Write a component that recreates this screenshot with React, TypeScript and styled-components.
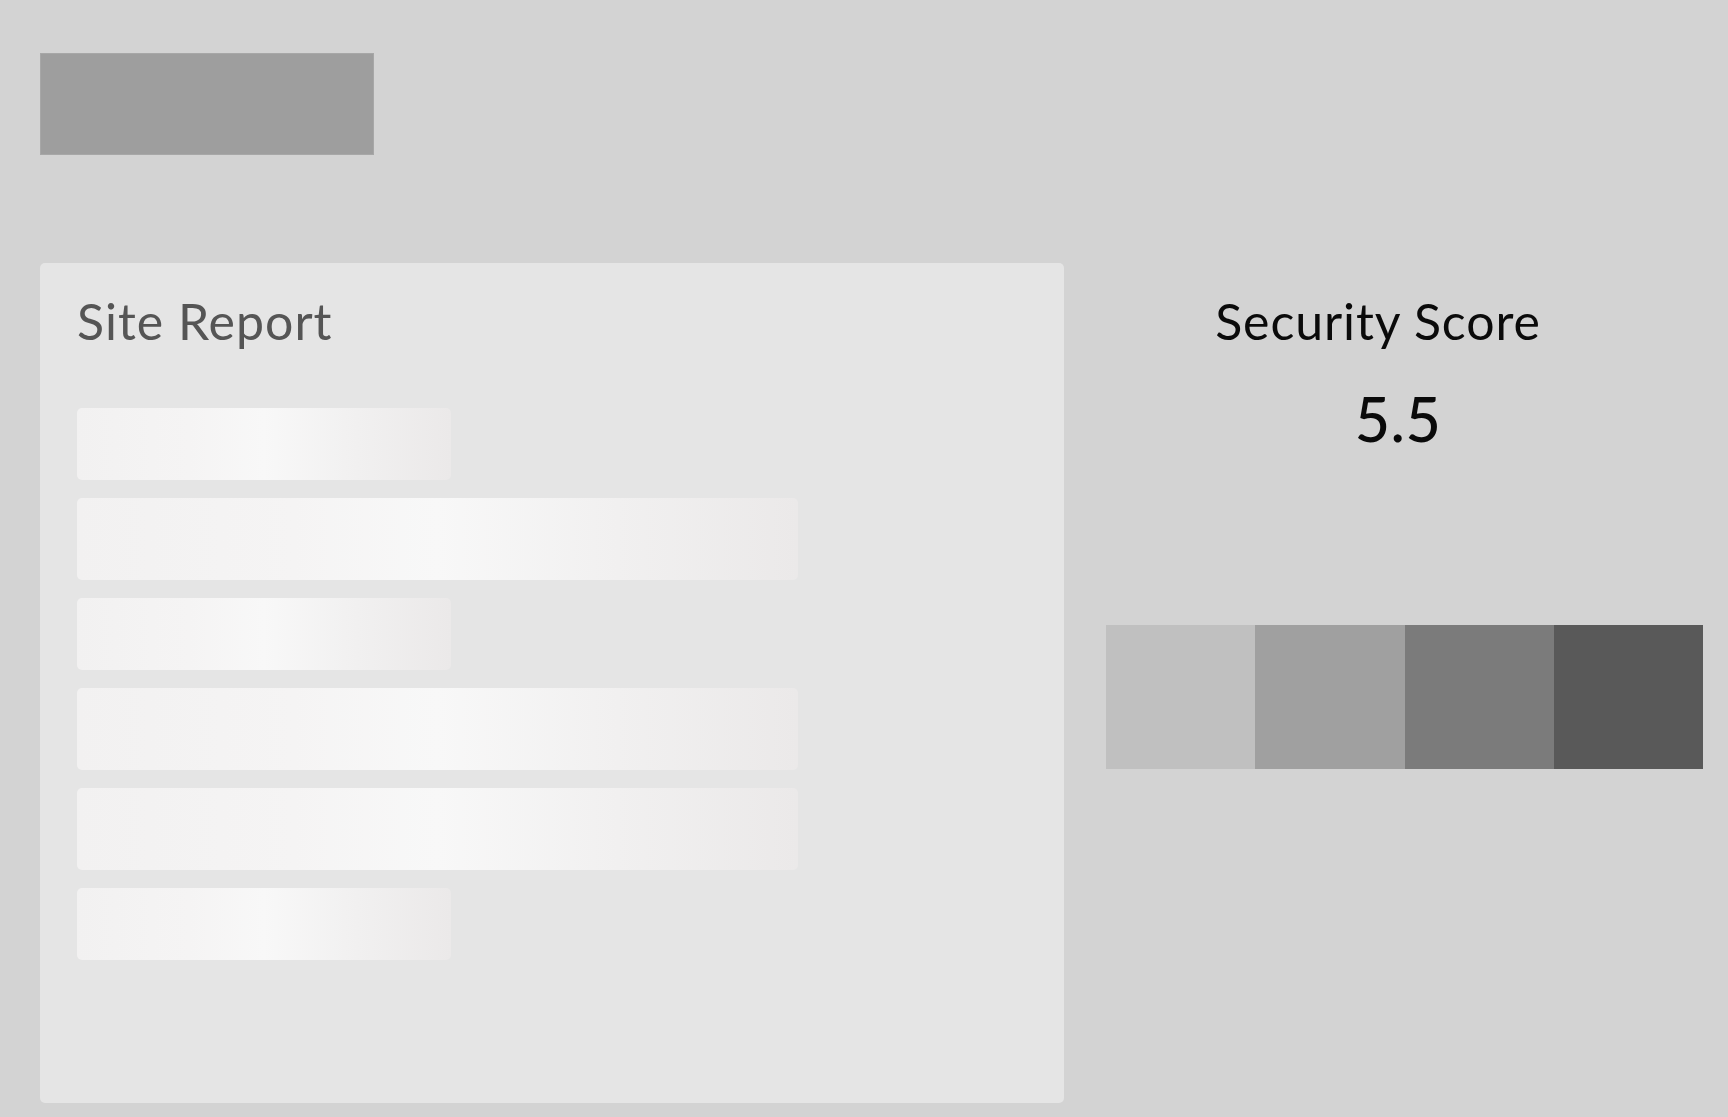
import React from "react";
import styled, { createGlobalStyle } from "styled-components";

const Global = createGlobalStyle`
  html, body { margin: 0; padding: 0; }
  body { background: #d3d3d3; font-family: "Lato", "Open Sans", sans-serif; }
  * { box-sizing: border-box; }
`;

const Page = styled.div`
  min-height: 100vh;
  background: #d3d3d3;
  padding: 53px 25px 0 40px;
`;

const Logo = styled.div`
  width: 334px;
  height: 102px;
  background: #9e9e9e;
  border: 1px solid #a7a7a7;
`;

const Main = styled.div`
  display: flex;
  align-items: flex-start;
  margin-top: 108px;
`;

const Card = styled.section`
  width: 1024px;
  height: 840px;
  flex-shrink: 0;
  background: #e5e5e5;
  border-radius: 5px;
  padding: 28px 37px 0 37px;
`;

const CardTitle = styled.h2`
  margin: 0;
  font-family: "Lato", "Open Sans", sans-serif;
  font-weight: 400;
  font-size: 50px;
  line-height: 60px;
  letter-spacing: 1px;
  color: #555555;
`;

const BarList = styled.div`
  display: flex;
  flex-direction: column;
  gap: 18px;
  margin-top: 57px;
`;

const Bar = styled.div<{ $long?: boolean }>`
  width: ${(p) => (p.$long ? "721px" : "374px")};
  height: ${(p) => (p.$long ? "82px" : "72px")};
  border-radius: 5px;
  background: linear-gradient(90deg, #f2f1f1 0%, #f5f4f4 30%, #f8f8f8 50%, #f1f0f0 75%, #ebe9e9 100%);
`;

const Side = styled.aside`
  flex: 1;
  margin-left: 42px;
  display: flex;
  flex-direction: column;
`;

const ScoreTitle = styled.h3`
  margin: 28px 0 0 0;
  padding-right: 53px;
  text-align: center;
  font-family: "Lato", "Open Sans", sans-serif;
  font-weight: 400;
  font-size: 50px;
  line-height: 60px;
  letter-spacing: 0.9px;
  color: #0a0a0a;
`;

const ScoreValue = styled.div`
  margin-top: 32px;
  padding-right: 13px;
  text-align: center;
  font-family: "Lato", "Open Sans", sans-serif;
  font-weight: 500;
  font-size: 61px;
  line-height: 72px;
  letter-spacing: 0.5px;
  color: #0a0a0a;
`;

const Scale = styled.div`
  display: flex;
  height: 144px;
  margin-top: 170px;
`;

const Segment = styled.div<{ $color: string }>`
  flex: 1;
  background: ${(p) => p.$color};
`;

const bars = [false, true, false, true, true, false];
const segments = ["#c0c0c0", "#a0a0a0", "#7b7b7b", "#595959"];

export default function App() {
  return (
    <>
      <Global />
      <Page>
        <Logo />
        <Main>
          <Card>
            <CardTitle>Site Report</CardTitle>
            <BarList>
              {bars.map((l, i) => (
                <Bar key={i} $long={l} />
              ))}
            </BarList>
          </Card>
          <Side>
            <ScoreTitle>Security Score</ScoreTitle>
            <ScoreValue>5.5</ScoreValue>
            <Scale>
              {segments.map((c) => (
                <Segment key={c} $color={c} />
              ))}
            </Scale>
          </Side>
        </Main>
      </Page>
    </>
  );
}
